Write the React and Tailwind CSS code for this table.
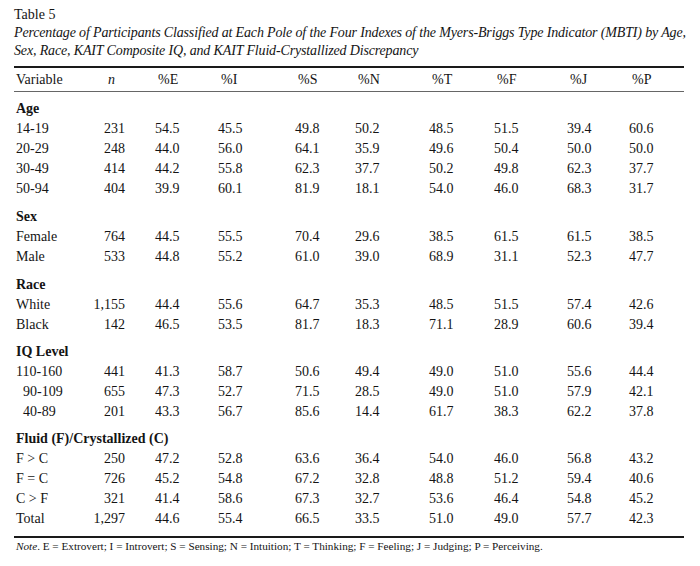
const cols = ['%E', '%I', '%S', '%N', '%T', '%F', '%J', '%P'];

const groups = [
  {
    label: 'Age',
    gap: 'mt-[7px]',
    rows: [
      ['14-19', '231', '54.5', '45.5', '49.8', '50.2', '48.5', '51.5', '39.4', '60.6'],
      ['20-29', '248', '44.0', '56.0', '64.1', '35.9', '49.6', '50.4', '50.0', '50.0'],
      ['30-49', '414', '44.2', '55.8', '62.3', '37.7', '50.2', '49.8', '62.3', '37.7'],
      ['50-94', '404', '39.9', '60.1', '81.9', '18.1', '54.0', '46.0', '68.3', '31.7'],
    ],
  },
  {
    label: 'Sex',
    gap: 'mt-[8px]',
    rows: [
      ['Female', '764', '44.5', '55.5', '70.4', '29.6', '38.5', '61.5', '61.5', '38.5'],
      ['Male', '533', '44.8', '55.2', '61.0', '39.0', '68.9', '31.1', '52.3', '47.7'],
    ],
  },
  {
    label: 'Race',
    gap: 'mt-[8px]',
    rows: [
      ['White', '1,155', '44.4', '55.6', '64.7', '35.3', '48.5', '51.5', '57.4', '42.6'],
      ['Black', '142', '46.5', '53.5', '81.7', '18.3', '71.1', '28.9', '60.6', '39.4'],
    ],
  },
  {
    label: 'IQ Level',
    gap: 'mt-[7px]',
    rows: [
      ['110-160', '441', '41.3', '58.7', '50.6', '49.4', '49.0', '51.0', '55.6', '44.4'],
      ['90-109', '655', '47.3', '52.7', '71.5', '28.5', '49.0', '51.0', '57.9', '42.1', true],
      ['40-89', '201', '43.3', '56.7', '85.6', '14.4', '61.7', '38.3', '62.2', '37.8', true],
    ],
  },
  {
    label: 'Fluid (F)/Crystallized (C)',
    gap: 'mt-[7px]',
    rows: [
      ['F > C', '250', '47.2', '52.8', '63.6', '36.4', '54.0', '46.0', '56.8', '43.2'],
      ['F = C', '726', '45.2', '54.8', '67.2', '32.8', '48.8', '51.2', '59.4', '40.6'],
      ['C > F', '321', '41.4', '58.6', '67.3', '32.7', '53.6', '46.4', '54.8', '45.2'],
      ['Total', '1,297', '44.6', '55.4', '66.5', '33.5', '51.0', '49.0', '57.7', '42.3'],
    ],
  },
];

const grid = 'grid grid-cols-[66px_75px_63px_77px_60px_74px_65px_73px_62px_55px]';

function DataRow({ row }) {
  const [label, n, ...vals] = row;
  const indent = row[10] === true;
  return (
    <div className={`${grid} h-[20px] items-center`}>
      <div className={indent ? 'pl-[9px]' : 'pl-[2px]'}>{label}</div>
      <div className="pr-[30px] text-right">{n}</div>
      {vals.slice(0, 8).map((v, i) => (
        <div key={i}>{v}</div>
      ))}
    </div>
  );
}

export default function App() {
  return (
    <div
      className="w-[700px] h-[566px] bg-white text-[#141414] px-[14px] pt-[6px] overflow-hidden"
      style={{ fontFamily: '"Liberation Serif", "Times New Roman", serif' }}
    >
      {/* Caption */}
      <div className="text-[14px] leading-[18px]">Table 5</div>
      <div className="italic text-[14px] leading-[18px] whitespace-nowrap tracking-[-0.15px]">
        <div>
          Percentage of Participants Classified at Each Pole of the Four Indexes of the Myers-Briggs Type Indicator (MBTI) by Age,
        </div>
        <div>Sex, Race, KAIT Composite IQ, and KAIT Fluid-Crystallized Discrepancy</div>
      </div>

      {/* Table */}
      <div className="mt-[6px] w-[670px] text-[14px] leading-[20px]">
        <div className="border-t-2 border-[#1a1a1a]" />
        <div className={`${grid} h-[24px] items-center border-b border-[#666]`}>
          <div className="pl-[2px]">Variable</div>
          <div className="pr-[40px] text-right italic">n</div>
          {cols.map((c) => (
            <div key={c} className="pl-[3px]">
              {c}
            </div>
          ))}
        </div>

        {groups.map((g) => (
          <div key={g.label} className={g.gap}>
            <div className="h-[20px] flex items-center pl-[2px] font-bold">{g.label}</div>
            {g.rows.map((r) => (
              <DataRow key={r[0]} row={r} />
            ))}
          </div>
        ))}

        <div className="mt-[7px] border-t-2 border-[#1a1a1a]" />
      </div>

      {/* Note */}
      <div className="mt-[1px] pl-[2px] text-[11.2px] leading-[14px]">
        <span className="italic">Note</span>. E = Extrovert; I = Introvert; S = Sensing; N = Intuition; T = Thinking; F = Feeling; J = Judging; P = Perceiving.
      </div>
    </div>
  );
}
